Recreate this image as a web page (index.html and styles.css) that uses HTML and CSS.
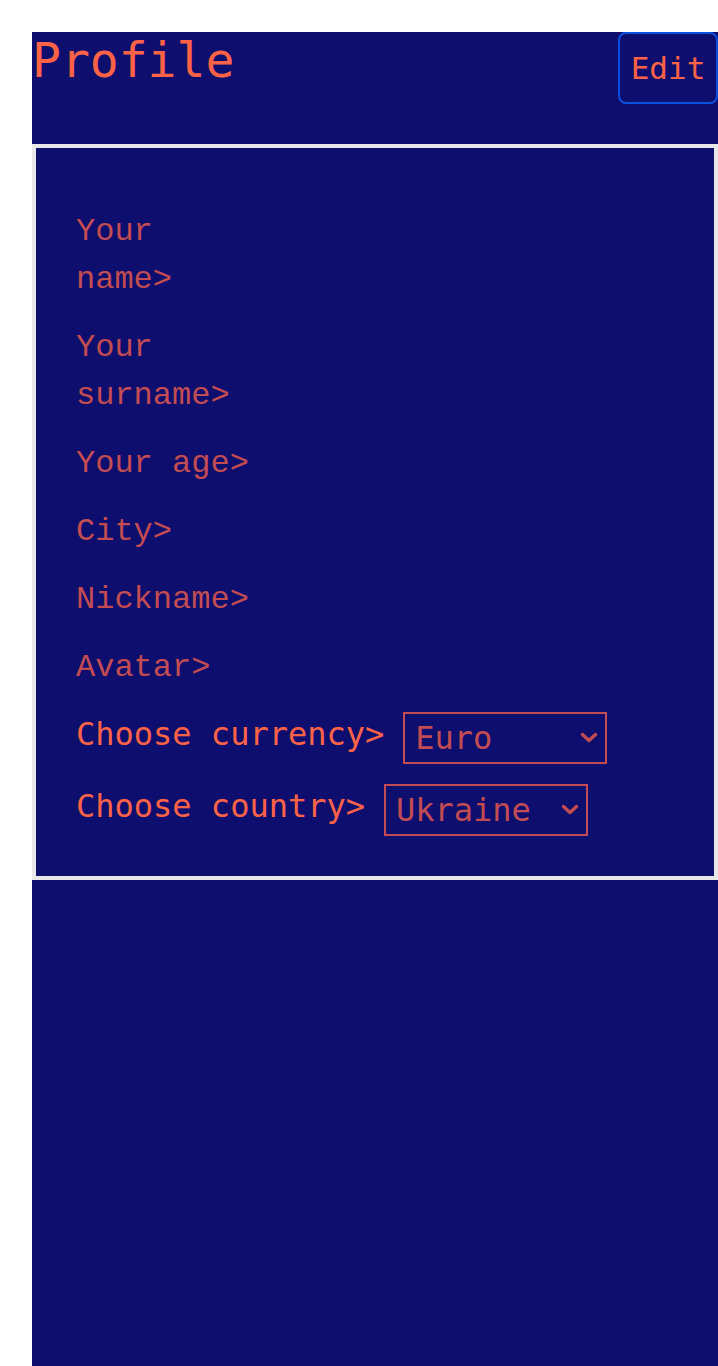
FILE: index.html
```html
<!DOCTYPE html>
<html lang="en">
<head>
<meta charset="utf-8">
<title>Profile</title>
<link rel="stylesheet" href="styles.css">
</head>
<body>
<div class="page">
  <header class="header">
    <h1 class="title">Profile</h1>
    <button class="edit-btn" type="button">Edit</button>
  </header>
  <section class="card">
    <div class="field"><span class="label">Your name&gt;</span></div>
    <div class="field"><span class="label">Your surname&gt;</span></div>
    <div class="field"><span class="label">Your age&gt;</span></div>
    <div class="field"><span class="label">City&gt;</span></div>
    <div class="field"><span class="label">Nickname&gt;</span></div>
    <div class="field"><span class="label">Avatar&gt;</span></div>
    <div class="choice">
      <span class="choice-label">Choose currency&gt;</span>
      <div class="select-wrap">
        <select class="select">
          <option>Euro</option>
          <option>Dollar</option>
          <option>Hryvnia</option>
        </select>
        <svg class="chevron" width="18" height="12" viewBox="0 0 18 12" aria-hidden="true"><path d="M2.5 2.5 L9 8.5 L15.5 2.5" fill="none" stroke="currentColor" stroke-width="3.4" stroke-linecap="round" stroke-linejoin="round"/></svg>
      </div>
    </div>
    <div class="choice">
      <span class="choice-label">Choose country&gt;</span>
      <div class="select-wrap">
        <select class="select">
          <option>Ukraine</option>
          <option>Poland</option>
          <option>Germany</option>
        </select>
        <svg class="chevron" width="18" height="12" viewBox="0 0 18 12" aria-hidden="true"><path d="M2.5 2.5 L9 8.5 L15.5 2.5" fill="none" stroke="currentColor" stroke-width="3.4" stroke-linecap="round" stroke-linejoin="round"/></svg>
      </div>
    </div>
  </section>
</div>
</body>
</html>
```

FILE: styles.css
```css
html {
  background: #ffffff;
}

body {
  margin: 32px 0 0 32px;
}

.page {
  background: #0e0e6e;
  min-height: 1334px;
  display: flex;
  flex-direction: column;
}

.header {
  height: 112px;
  display: flex;
  justify-content: space-between;
  align-items: flex-start;
}

.title {
  margin: 0;
  font-family: "DejaVu Sans Mono", monospace;
  font-size: 48px;
  font-weight: normal;
  color: #ff6347;
  line-height: normal;
}

.edit-btn {
  margin: 0;
  width: 100px;
  height: 72px;
  padding: 0;
  background: transparent;
  border: 2px solid #0b4ee0;
  border-radius: 8px;
  font-family: "DejaVu Sans Mono", monospace;
  font-size: 31px;
  color: #ff6347;
}

.card {
  border: 4px solid #e8e8e8;
  padding: 60px 40px 40px;
  display: flex;
  flex-direction: column;
  gap: 20px;
}

.field {
  display: flex;
}

.label {
  max-width: 182px;
  font-family: "Liberation Mono", monospace;
  font-size: 32px;
  line-height: 48px;
  color: #c24c52;
}

.choice {
  display: flex;
  align-items: flex-start;
  gap: 19px;
}

.choice-label {
  font-family: "DejaVu Sans Mono", monospace;
  font-size: 32px;
  line-height: 44px;
  color: #ff6347;
}

.select-wrap {
  position: relative;
  color: #c24c52;
}

.select {
  display: block;
  width: 204px;
  height: 52px;
  margin: 0;
  padding: 0 10px;
  -webkit-appearance: none;
  appearance: none;
  background: transparent;
  border: 2px solid #c24c52;
  border-radius: 0;
  font-family: "DejaVu Sans Mono", monospace;
  font-size: 32px;
  color: #c24c52;
}

.chevron {
  position: absolute;
  right: 9px;
  top: 20px;
  pointer-events: none;
}
```
